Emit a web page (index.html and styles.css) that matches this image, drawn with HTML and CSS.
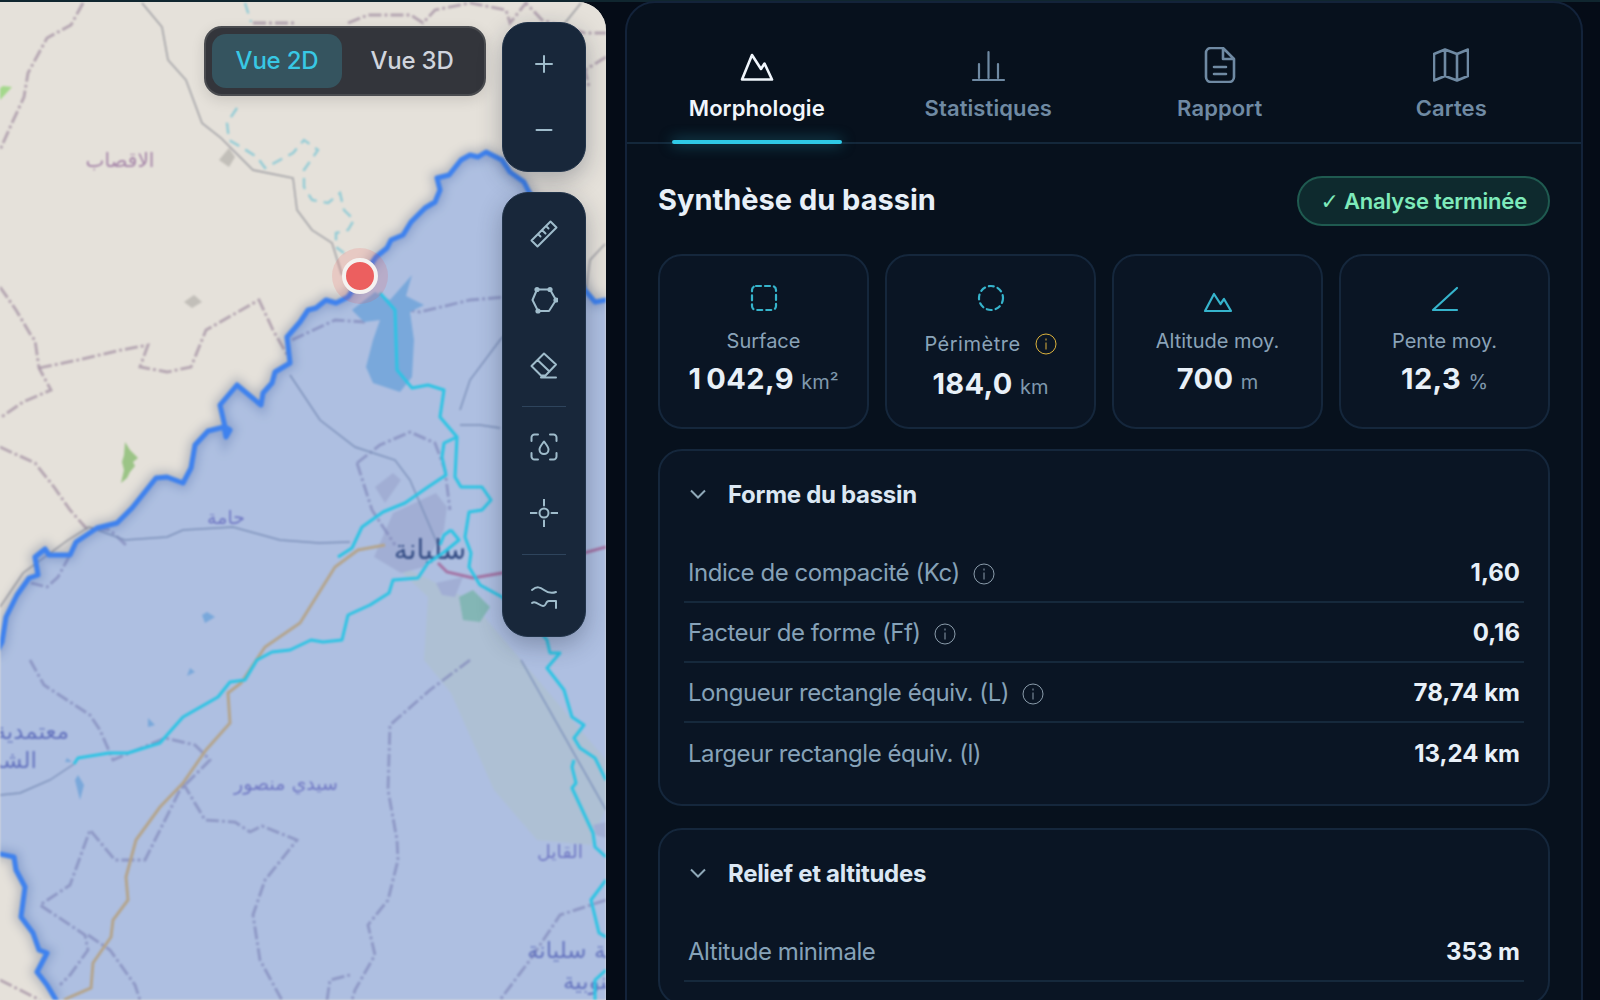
FILE: index.html
```html
<!DOCTYPE html>
<html lang="fr">
    <head>
        <meta charset="utf-8">
        <title>Synthèse du bassin</title>
        <link rel="stylesheet" href="styles.css">
    </head>
    <body>
        <div class="top_strip"></div>
        <div class="app">
            <div class="map">
                <svg class="map_canvas" viewBox="0 0 606 1000" width="606" height="1000">
                    <rect class="map_land" x="0" y="0" width="606" height="1000"/>

                    <!-- land use -->
                    <path class="map_green" d="M0 100L12 87L3 86L0 88Z"/>
                    <path class="map_forest" d="M125 442L130 450L138 458L133 462L135 466L130 472L127 478L121 483L124 470L122 462L124 455Z"/>
                    <path class="map_town_tan" d="M219 160L229 148L235 157L229 167ZM184 302L194 295L202 302L192 308Z"/>
                    <path class="map_field" d="M389 560L428 597L424 660L451 693L494 790L537 840L591 845L606 807L606 760L521 660L470 600L420 575Z"/>
                    <path class="map_town" d="M375 487L393 473L401 480L385 503ZM393 513L436 493L447 507L444 530L424 567L401 573L374 557ZM436 583L463 577L455 597L442 595ZM593 825L606 822V838L596 835Z"/>
                    <path class="map_meadow" d="M459 597L473 590L490 607L480 622L463 620Z"/>

                    <!-- admin limits -->
                    <g class="map_limits">
                        <path d="M83 3L71 25L47 38L28 73L24 97L12 123L0 150"/>
                        <path d="M0 287L16 310L32 337L35 340L39 368L51 390L23 402L0 418"/>
                        <path d="M39 368L78 360L121 350L148 345L140 367L167 372L191 367L202 340L206 330L259 300L273 330L290 360"/>
                        <path d="M0 447L35 463L54 487L70 510L86 528L110 530L126 545M70 555L58 577L47 587L31 583"/>
                        <path d="M253 23L297 23M348 23L368 15L411 15L423 23L435 10L470 3L506 10L510 23L526 3L542 20L585 33L606 33"/>
                        <path d="M606 57L585 70L589 87"/>
                        <path d="M292 340L335 320L365 322M380 306L420 312L470 300L530 295"/>
                        <path d="M357 463L380 445L410 432L435 443L445 470L450 510M357 463L372 510L395 545"/>
                        <path d="M0 980L40 1000M30 660L44 685L90 715L100 730L113 760L165 738L195 745L210 760L180 790L145 860L115 860L90 830L70 885L40 905L85 935L88 950L70 975L60 985M88 935L110 950L135 985L140 1000"/>
                        <path d="M183 783L205 820L235 822L250 832L262 826L297 840L265 880L253 915L260 960L290 1015"/>
                        <path d="M470 660L430 690L390 725L388 790L397 840L398 860L388 900L368 925L375 955L355 990L352 1000"/>
                        <path d="M606 900L560 915L530 960L500 1000"/>
                        <path d="M327 1000L330 980L350 975"/>
                    </g>
                    <g class="map_thin">
                        <path d="M142 3L162 27L168 60L186 80L202 123L221 138L253 170L293 178L297 210L312 230L332 243L342 275"/>
                        <path d="M290 375L320 420L355 447L395 460L410 480L440 550"/>
                        <path d="M0 607L23 573L68 540L89 527L125 540L167 537L183 530L233 527L280 540L319 543L350 542"/>
                        <path d="M581 3L565 23M605 244L590 260L586 290"/>
                        <path d="M460 410L470 380L500 340L540 300M460 425L480 425L500 428"/>
                        <path d="M0 795L20 793L50 780L74 764"/>
                        <path d="M521 660L606 810"/>
                    </g>

                    <!-- water -->
                    <path class="map_lake" d="M352 310L375 292L390 300L412 275L406 296L424 305L410 312L414 340L412 377L400 392L373 383L366 367L373 340L380 320L364 322Z"/>
                    <path class="map_pond" d="M207 612L215 617L205 623L202 615ZM190 668L195 672L187 676ZM148 718L155 725L148 727ZM67 758L72 762L65 762ZM78 775L84 785L80 800L75 780Z"/>
                    <path class="map_river_dash" d="M245 3L251 22M237 108L227 123L229 140L241 147L257 157L265 168L293 153L304 140L318 150L304 170L304 187L312 200L328 203L340 193L344 210L354 220L348 230L336 233L336 247L344 253"/>

                    <!-- roads -->
                    <path class="map_road_red" d="M438 563L447 572L473 578L502 573L584 553L606 547"/>
                    <path class="map_road_tan" d="M385 545L358 550L335 567L300 623L265 647L241 683L228 693L230 723L206 750L183 783L160 807L136 840L126 877L128 900L113 920L111 937L93 963L91 988L70 997L64 1000"/>

                    <!-- place names -->
                    <text class="map_label map_label_tan" x="120" y="167">الاقصاب</text>
                    <text class="map_label map_label_small" x="226" y="524">حامة</text>
                    <text class="map_label map_label_town" x="430" y="559">سليانة</text>
                    <text class="map_label map_label_small" x="286" y="790">سيدي منصور</text>
                    <text class="map_label map_label_small" x="560" y="858">القايل</text>
                    <text class="map_label map_label_edge" x="69" y="739">معتمدية</text>
                    <text class="map_label map_label_edge" x="37" y="768">الشمالية</text>
                    <text class="map_label map_label_clip" x="527" y="958">معتمدية سليانة</text>
                    <text class="map_label map_label_clip" x="563" y="989">الجنوبية</text>

                    <!-- basin -->
                    <path class="map_basin_glow" d="M606 300L595 302L585 290L528 190L524 182L510 172L502 160L486 152L478 157L470 155L461 160L449 175L437 178L440 190L435 202L425 208L411 222L403 235L391 240L387 248L376 257L360 280L348 297L336 303L326 300L316 308L308 310L300 322L287 337L290 363L275 372L272 383L263 393L261 405L237 385L220 405L225 427L230 430L226 437L224 427L208 431L195 445L191 468L183 483L167 477L156 478L132 508L117 523L97 528L76 542L70 555L49 555L45 549L35 557L38 575L29 578L17 595L6 617L2 642L-5 655"/>
                    <path class="map_basin_glow" d="M-5 853L14 857L16 870L25 887L21 917L33 933L39 950L47 953L37 972L47 985L56 1000"/>
                    <path class="map_basin" d="M606 300L595 302L585 290L528 190L524 182L510 172L502 160L486 152L478 157L470 155L461 160L449 175L437 178L440 190L435 202L425 208L411 222L403 235L391 240L387 248L376 257L360 280L348 297L336 303L326 300L316 308L308 310L300 322L287 337L290 363L275 372L272 383L263 393L261 405L237 385L220 405L225 427L230 430L226 437L224 427L208 431L195 445L191 468L183 483L167 477L156 478L132 508L117 523L97 528L76 542L70 555L49 555L45 549L35 557L38 575L29 578L17 595L6 617L2 642L-5 655L-5 853L14 857L16 870L25 887L21 917L33 933L39 950L47 953L37 972L47 985L56 1000L56 1008L612 1008L612 300Z"/>

                    <!-- rivers -->
                    <g class="map_rivers">
                        <path d="M380 293L395 310L396 340L397 370L412 388L428 385L444 390L440 417L457 437L455 477L461 487L482 487L491 500L482 510L469 512L465 537L471 553L469 567L480 585L502 597L530 620L547 640L550 653L560 653L547 668L564 690L572 717L584 725L574 738L580 748L595 758L606 780"/>
                        <path d="M457 437L444 443L442 457L446 475L428 487L405 503L383 512L362 527L352 548L338 557"/>
                        <path d="M451 530L459 540L443 553L428 563L418 578L393 580L389 593L370 605L348 615L342 640L323 642L311 640L290 650L272 652L257 660L245 680L230 682L218 697L183 717L167 735L160 743L128 753L109 753L78 758L74 764"/>
                        <path d="M451 530L444 535L440 545"/>
                        <path d="M574 760L572 767L576 783L572 788L593 833L595 847L606 857M606 880L591 900L599 933L606 937M606 970L595 980L595 1000"/>
                    </g>
                </svg>

                <div class="marker_halo"><div class="marker_dot"></div></div>

                <div class="view_switch">
                    <div class="view_btn view_btn_active">Vue 2D</div>
                    <div class="view_btn view_btn_idle">Vue 3D</div>
                </div>

                <div class="map_tools">
                    <div class="tool_group">
                        <div class="tool_btn">
                            <svg class="tool_icon" viewBox="0 0 28 28"><path d="M14 6V22M6 14H22"/></svg>
                        </div>
                        <div class="tool_btn">
                            <svg class="tool_icon" viewBox="0 0 28 28"><path d="M6.500 14H21.500"/></svg>
                        </div>
                    </div>
                    <div class="tool_group tool_group_long">
                        <div class="tool_btn">
                            <svg class="tool_icon" viewBox="0 0 28 28"><path d="M1.5 20.5L20.5 1.5L26.5 7.5L7.5 26.5ZM8 14L10.5 16.5M12 10L15.5 13.5M16 6L18.5 8.5"/></svg>
                        </div>
                        <div class="tool_btn">
                            <svg class="tool_icon" viewBox="0 0 28 28"><path d="M7 3.5H20L26 14L19 25H8L2.5 14Z"/><circle class="tool_dot" cx="7" cy="3.5" r="2.6"/><circle class="tool_dot" cx="20" cy="3.5" r="2.6"/><circle class="tool_dot" cx="26" cy="14" r="2.6"/><circle class="tool_dot" cx="8" cy="25" r="2.6"/></svg>
                        </div>
                        <div class="tool_btn">
                            <svg class="tool_icon" viewBox="0 0 28 28"><path d="M14 1.5L26 12.5L15.5 23.5H11L1.5 14ZM7.5 8L19.5 19.5M11 25.5H26"/></svg>
                        </div>
                        <div class="tool_divider"></div>
                        <div class="tool_btn">
                            <svg class="tool_icon" viewBox="0 0 28 28"><path d="M1.5 8V4.5A3 3 0 0 1 4.5 1.5H8M20 1.5H23.5A3 3 0 0 1 26.5 4.5V8M26.5 20V23.5A3 3 0 0 1 23.5 26.5H20M8 26.5H4.5A3 3 0 0 1 1.5 23.5V20M14 8.5C16.5 12 18.5 14 18.5 16.5A4.5 4.5 0 0 1 9.5 16.5C9.5 14 11.5 12 14 8.5Z"/></svg>
                        </div>
                        <div class="tool_btn">
                            <svg class="tool_icon" viewBox="0 0 28 28"><circle cx="14" cy="14" r="4.5"/><path d="M14 0V6.5M14 21.5V28M0 14H6.5M21.5 14H28"/></svg>
                        </div>
                        <div class="tool_divider tool_divider_low"></div>
                        <div class="tool_btn">
                            <svg class="tool_icon" viewBox="0 0 28 28"><path d="M2 5C7 1 10 2 14 5C18 8 21 9 26 7M2 18C6 15 9 21 13 21C17 21 15 16 19 16H26V23"/></svg>
                        </div>
                    </div>
                </div>
            </div>

            <div class="panel">
                <div class="tabs">
                    <div class="tab tab_active">
                        <svg class="tab_icon" viewBox="0 0 36 36"><path d="M3 32.5L13 8L22 22L25.500 16.500L33 32.5Z"/></svg>
                        <span class="tab_label">Morphologie</span>
                        <span class="tab_bar"></span>
                    </div>
                    <div class="tab">
                        <svg class="tab_icon" viewBox="0 0 36 36"><path d="M3 33H34M9 31V17M18.500 31V5M28 31V17" class="tab_thin"/></svg>
                        <span class="tab_label">Statistiques</span>
                    </div>
                    <div class="tab">
                        <svg class="tab_icon" viewBox="0 0 36 36"><path d="M21 1H9A5 5 0 0 0 4 6V30A5 5 0 0 0 9 35H27A5 5 0 0 0 32 30V12ZM21 1V12H32M12 20H24M12 27H24"/></svg>
                        <span class="tab_label">Rapport</span>
                    </div>
                    <div class="tab">
                        <svg class="tab_icon" viewBox="0 0 36 36"><path d="M1 7L12 2.500L24 7L35 2.500V29L24 33.500L12 29L1 33.500ZM12 2.500V29M24 7V33.500"/></svg>
                        <span class="tab_label">Cartes</span>
                    </div>
                </div>

                <div class="panel_body">
                    <div class="summary_head">
                        <h1 class="summary_title">Synthèse du bassin</h1>
                        <div class="status_badge"><span class="status_check">✓</span> Analyse terminée</div>
                    </div>

                    <div class="stat_grid">
                        <div class="stat_card">
                            <svg class="stat_icon" viewBox="0 0 36 36"><rect class="stat_dash" x="6" y="6" width="24" height="24" rx="4"/></svg>
                            <div class="stat_label">Surface</div>
                            <div class="stat_value">1&#8239;042,9 <span class="stat_unit">km²</span></div>
                        </div>
                        <div class="stat_card">
                            <svg class="stat_icon" viewBox="0 0 36 36"><circle class="stat_dash" cx="18" cy="18" r="12"/></svg>
                            <div class="stat_label stat_label_info">Périmètre
                                <svg class="info_icon info_icon_warn" viewBox="0 0 22 22"><circle cx="11" cy="11" r="10"/><path d="M11 9.500V16.500M11 5.500V7.500"/></svg>
                            </div>
                            <div class="stat_value">184,0 <span class="stat_unit">km</span></div>
                        </div>
                        <div class="stat_card">
                            <svg class="stat_icon" viewBox="0 0 36 36"><path d="M5 31H31L24 19L20.500 24L14 14Z"/></svg>
                            <div class="stat_label">Altitude moy.</div>
                            <div class="stat_value">700 <span class="stat_unit">m</span></div>
                        </div>
                        <div class="stat_card">
                            <svg class="stat_icon" viewBox="0 0 36 36"><path d="M30 8L6 30H30"/></svg>
                            <div class="stat_label">Pente moy.</div>
                            <div class="stat_value">12,3 <span class="stat_unit">%</span></div>
                        </div>
                    </div>

                    <div class="section">
                        <div class="section_head">
                            <svg class="section_chevron" viewBox="0 0 18 18"><path d="M2 5.500L9 12.500L16 5.500"/></svg>
                            <span class="section_title">Forme du bassin</span>
                        </div>
                        <div class="data_row">
                            <span class="data_name">Indice de compacité (Kc)
                                <svg class="info_icon" viewBox="0 0 22 22"><circle cx="11" cy="11" r="10"/><path d="M11 9.500V16.500M11 5.500V7.500"/></svg>
                            </span>
                            <span class="data_value">1,60</span>
                        </div>
                        <div class="data_row">
                            <span class="data_name">Facteur de forme (Ff)
                                <svg class="info_icon" viewBox="0 0 22 22"><circle cx="11" cy="11" r="10"/><path d="M11 9.500V16.500M11 5.500V7.500"/></svg>
                            </span>
                            <span class="data_value">0,16</span>
                        </div>
                        <div class="data_row">
                            <span class="data_name">Longueur rectangle équiv. (L)
                                <svg class="info_icon" viewBox="0 0 22 22"><circle cx="11" cy="11" r="10"/><path d="M11 9.500V16.500M11 5.500V7.500"/></svg>
                            </span>
                            <span class="data_value">78,74 km</span>
                        </div>
                        <div class="data_row data_row_last">
                            <span class="data_name">Largeur rectangle équiv. (l)</span>
                            <span class="data_value">13,24 km</span>
                        </div>
                    </div>

                    <div class="section section_second">
                        <div class="section_head">
                            <svg class="section_chevron" viewBox="0 0 18 18"><path d="M2 5.500L9 12.500L16 5.500"/></svg>
                            <span class="section_title">Relief et altitudes</span>
                        </div>
                        <div class="data_row">
                            <span class="data_name">Altitude minimale</span>
                            <span class="data_value">353 m</span>
                        </div>
                    </div>
                </div>
            </div>
        </div>
    </body>
</html>
```

FILE: styles.css
```css
html, body {
    margin: 0;
    height: 1000px;
    overflow: hidden;
}
body {
    background: #050c17;
    color: #e8f0f8;
    font-family: "Inter", "Noto Sans", sans-serif;
}
.top_strip {
    height: 2px;
    background: #10262f;
}
.app {
    display: flex;
    gap: 19px;
    height: 998px;
    padding-right: 17px;
}

/* map */
.map {
    position: relative;
    flex: 0 0 606px;
    overflow: hidden;
    border-radius: 0 28px 0 0;
    background: #e5e1da;
}
.map_canvas {
    position: absolute;
    left: 0;
    top: -2px;
    display: block;
    filter: blur(0.9px);
}
.map_land { fill: #e5e1da; }
.map_green { fill: #a4d88c; }
.map_forest { fill: #9bc486; }
.map_town_tan { fill: #c2bfb9; }
.map_field { fill: #e5e2c8; }
.map_town { fill: #d2c8c8; }
.map_meadow { fill: #a5d39a; }
.map_limits path {
    fill: none;
    stroke: #a08ca0;
    stroke-width: 2.8;
    stroke-dasharray: 13 3 3 3;
    stroke-opacity: 0.7;
}
.map_thin path {
    fill: none;
    stroke: #9a9aa0;
    stroke-width: 1.4;
}
.map_lake { fill: #97bed2; }
.map_pond { fill: #97bed2; }
.map_river_dash {
    fill: none;
    stroke: #94ccd6;
    stroke-width: 2.4;
    stroke-dasharray: 11 7;
}
.map_road_red {
    fill: none;
    stroke: #d67080;
    stroke-width: 3;
}
.map_road_tan {
    fill: none;
    stroke: #edb95d;
    stroke-width: 3;
}
.map_label {
    font-family: "DejaVu Sans", sans-serif;
    text-anchor: middle;
    direction: rtl;
}
.map_label_tan {
    font-size: 20px;
    fill: #a585a8;
}
.map_label_small {
    font-size: 19px;
    fill: #8a78b0;
}
.map_label_town {
    font-size: 28px;
    fill: #2e3550;
}
.map_label_edge {
    font-size: 23px;
    fill: #7a72a8;
    text-anchor: start;
}
.map_label_clip {
    font-size: 23px;
    fill: #7a72a8;
    text-anchor: end;
}
.map_basin {
    fill: rgba(59, 122, 240, 0.32);
    stroke: #3f82ee;
    stroke-width: 5;
    stroke-linejoin: round;
}
.map_basin_glow {
    fill: none;
    stroke: rgba(60, 80, 120, 0.28);
    stroke-width: 12;
    filter: blur(5px);
}
.map_rivers path {
    fill: none;
    stroke: #2cc4e4;
    stroke-width: 3;
    stroke-linejoin: round;
}
.marker_halo {
    position: absolute;
    left: 332px;
    top: 246px;
    width: 56px;
    height: 56px;
    display: flex;
    align-items: center;
    justify-content: center;
    border-radius: 50%;
    background: rgba(239, 68, 68, 0.15);
}
.marker_dot {
    box-sizing: border-box;
    width: 36px;
    height: 36px;
    border: 4px solid #f5f2f0;
    border-radius: 50%;
    background: #ec5f5f;
}
.view_switch {
    position: absolute;
    left: 204px;
    top: 24px;
    box-sizing: border-box;
    width: 282px;
    height: 70px;
    display: flex;
    align-items: center;
    padding: 0 6px;
    border: 2px solid #4a4c50;
    border-radius: 18px;
    background: #33353b;
    box-shadow: 0 4px 14px rgba(0, 0, 0, 0.12);
}
.view_btn {
    width: 130px;
    height: 54px;
    line-height: 54px;
    text-align: center;
    font-size: 24px;
    font-weight: 500;
    color: #d0d4dd;
    border-radius: 14px;
    letter-spacing: -0.2px;
}
.view_btn_active {
    background: #35545f;
    color: #38c8e4;
}
.view_btn_idle {
    margin-left: 5px;
}
.map_tools {
    position: absolute;
    left: 502px;
    top: 20px;
    display: flex;
    flex-direction: column;
    gap: 20px;
}
.tool_group {
    box-sizing: border-box;
    width: 84px;
    padding: 8px 0;
    border: 1px solid #22344a;
    border-radius: 26px;
    background: #18273a;
    box-shadow: 0 8px 24px rgba(20, 30, 50, 0.3);
}
.tool_group_long {
    padding: 8px 0 4px;
}
.tool_btn {
    height: 66px;
    display: flex;
    align-items: center;
    justify-content: center;
}
.tool_icon {
    width: 28px;
    height: 28px;
    fill: none;
    stroke: #9fbccb;
    stroke-width: 2;
    stroke-linecap: round;
    stroke-linejoin: round;
}
.tool_dot {
    fill: #9fbccb;
    stroke: none;
}
.tool_divider {
    height: 1px;
    margin: 7px 19px;
    background: #2e445c;
}
.tool_divider_low {
    margin: 8px 19px 11px;
}

/* panel */
.panel {
    flex: 1;
    box-sizing: border-box;
    height: 1010px;
    margin-top: -1px;
    border: 2px solid #13233a;
    border-radius: 30px 30px 0 0;
    background: #07111d;
    overflow: hidden;
}
.tabs {
    display: flex;
    height: 139px;
    padding: 0 14px;
    border-bottom: 2px solid #14283b;
}
.tab {
    position: relative;
    flex: 1;
    display: flex;
    flex-direction: column;
    align-items: center;
    padding-top: 44px;
    color: #6f8aa3;
}
.tab_active {
    color: #f0f6fc;
}
.tab_icon {
    width: 36px;
    height: 36px;
    fill: none;
    stroke: currentColor;
    stroke-width: 2.6;
    stroke-linejoin: round;
    stroke-linecap: round;
}
.tab_thin {
    stroke-width: 2.2;
}
.tab_label {
    margin-top: 10px;
    font-size: 22px;
    line-height: 30px;
    font-weight: 600;
    letter-spacing: 0.1px;
}
.tab_bar {
    position: absolute;
    left: 31px;
    right: 31px;
    bottom: -2px;
    height: 4px;
    border-radius: 2px;
    background: #2fc9e6;
    box-shadow: 0 0 14px rgba(47, 201, 230, 0.55);
}
.panel_body {
    padding: 32px 31px 0;
}
.summary_head {
    display: flex;
    align-items: center;
    justify-content: space-between;
    height: 50px;
    margin-bottom: 28px;
}
.summary_title {
    margin: -3px 0 0;
    font-size: 29px;
    font-weight: 700;
    letter-spacing: 0;
    color: #e8f0f8;
}
.status_badge {
    box-sizing: border-box;
    height: 50px;
    line-height: 46px;
    padding: 0 21px;
    border: 2px solid #1f5a50;
    border-radius: 25px;
    background: #0e2a2e;
    color: #7eeabb;
    font-size: 22px;
    font-weight: 600;
    letter-spacing: -0.2px;
}
.status_check {
    font-family: "DejaVu Sans", sans-serif;
}
.stat_grid {
    display: grid;
    grid-template-columns: repeat(4, 1fr);
    gap: 16px;
    margin-bottom: 20px;
}
.stat_card {
    display: flex;
    flex-direction: column;
    align-items: center;
    padding: 24px 0 23px;
    border: 2px solid #15273c;
    border-radius: 24px;
    background: #0a1524;
}
.stat_icon {
    width: 36px;
    height: 36px;
    fill: none;
    stroke: #36b4cc;
    stroke-width: 2.2;
    stroke-linecap: round;
    stroke-linejoin: round;
}
.stat_dash {
    stroke-dasharray: 5 4;
}
.stat_label {
    display: flex;
    align-items: center;
    justify-content: center;
    height: 28px;
    margin-top: 11px;
    font-size: 20px;
    color: #8aa3b8;
}
.stat_label_info {
    height: 33px;
    gap: 14px;
    letter-spacing: 0.5px;
}
.stat_value {
    margin-top: 4px;
    font-size: 29px;
    line-height: 40px;
    font-weight: 700;
    color: #e8f0f8;
    letter-spacing: 0.4px;
}
.stat_unit {
    font-size: 20px;
    line-height: 1;
    font-weight: 400;
    color: #7f98ad;
    letter-spacing: 0;
}
.info_icon {
    flex: none;
    width: 22px;
    height: 22px;
    fill: none;
    stroke: #8a9cab;
    stroke-width: 1;
    vertical-align: -4px;
    margin-left: 7px;
}
.info_icon_warn {
    stroke: #dcb23c;
    margin-left: 0;
}
.section {
    padding: 24px 24px 21px;
    border: 2px solid #15273c;
    border-radius: 24px;
    background: #0a1524;
}
.section_second {
    margin-top: 22px;
}
.section_head {
    display: flex;
    align-items: center;
    height: 38px;
    margin-bottom: 30px;
    padding-left: 5px;
}
.section_chevron {
    width: 18px;
    height: 18px;
    margin-right: 21px;
    fill: none;
    stroke: #8fa8b8;
    stroke-width: 2;
}
.section_title {
    font-size: 24px;
    font-weight: 700;
    color: #dbe7f3;
    letter-spacing: -0.3px;
}
.data_row {
    display: flex;
    align-items: center;
    justify-content: space-between;
    box-sizing: border-box;
    height: 60px;
    padding: 0 4px;
    border-bottom: 2px solid #16293c;
}
.data_row_last {
    border-bottom: 0;
}
.data_name {
    font-size: 24px;
    color: #86a2b8;
    letter-spacing: -0.45px;
}
.data_value {
    font-size: 24px;
    font-weight: 700;
    color: #e8f0f8;
}
```
